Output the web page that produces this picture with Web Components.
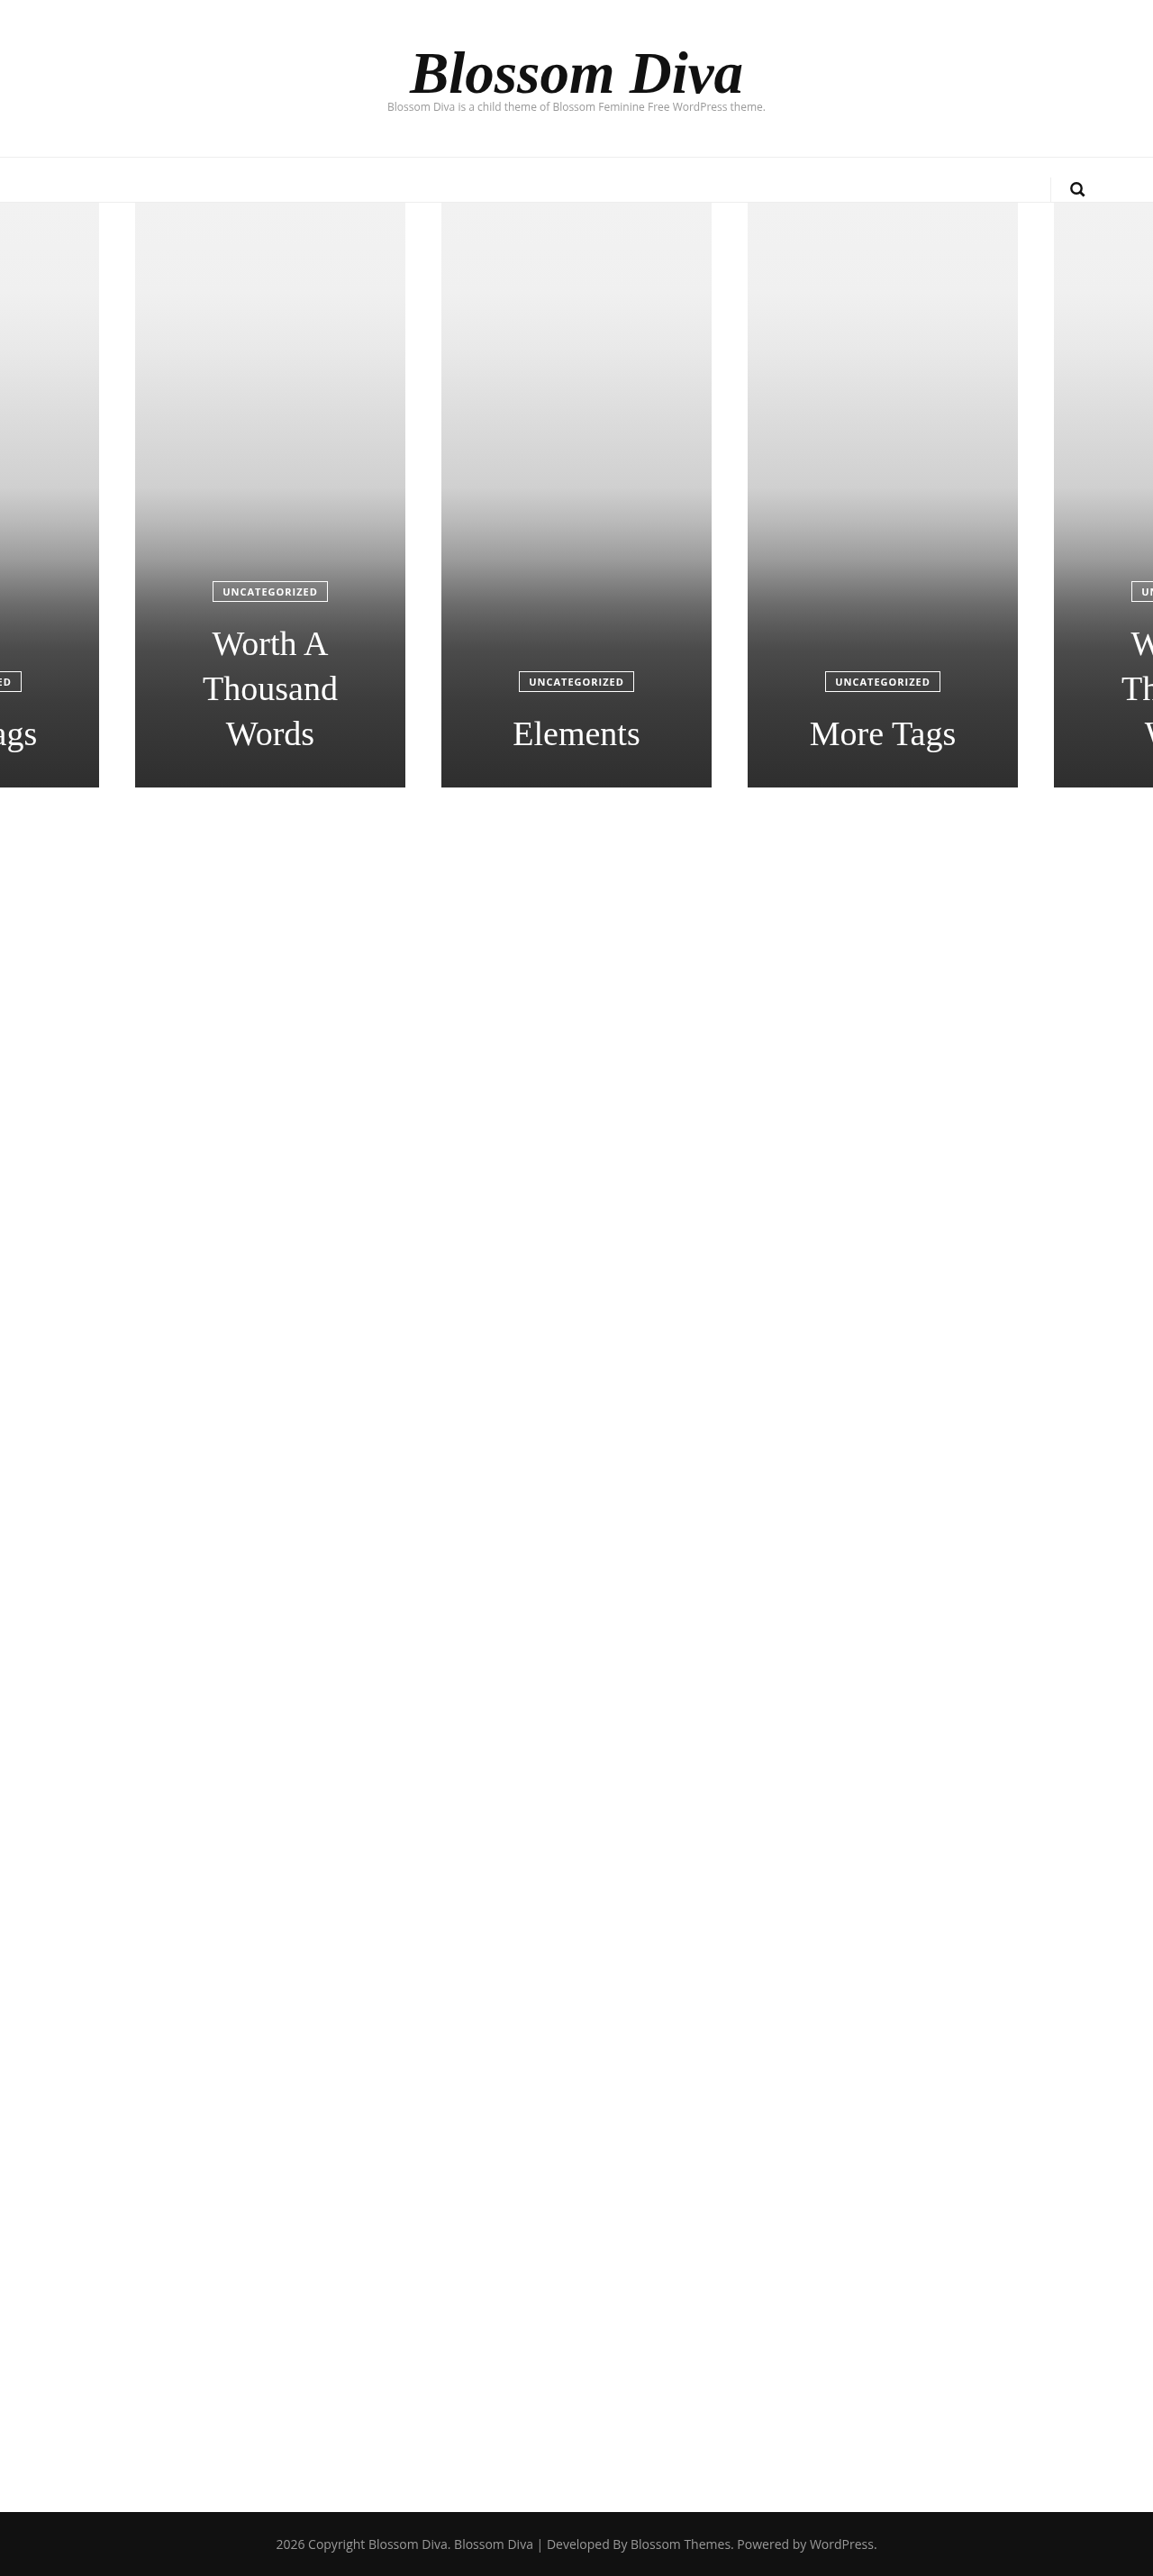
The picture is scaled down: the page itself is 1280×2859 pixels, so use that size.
<!DOCTYPE html>
<html lang="en">
<head>
<meta charset="utf-8">
<title>Blossom Diva</title>
<style>
  html, body { margin: 0; padding: 0; background: #fff; }
  body { font-family: "Open Sans", "Liberation Sans", sans-serif; }
</style>
</head>
<body>
<site-page>
  <site-header slot="header" title="Blossom Diva" tagline="Blossom Diva is a child theme of Blossom Feminine Free WordPress theme."></site-header>
  <site-nav slot="nav"></site-nav>
  <post-slider slot="slider">
    <post-card category="Uncategorized">More Tags</post-card>
    <post-card category="Uncategorized">Worth A Thousand Words</post-card>
    <post-card category="Uncategorized">Elements</post-card>
    <post-card category="Uncategorized">More Tags</post-card>
    <post-card category="Uncategorized">Worth A Thousand Words</post-card>
  </post-slider>
  <site-footer slot="footer">2026 Copyright Blossom Diva. Blossom Diva | Developed By Blossom Themes. Powered by WordPress.</site-footer>
</site-page>

<script>
  class SitePage extends HTMLElement {
    constructor() {
      super();
      // own layer: the reference text has grey antialiasing, not subpixel
      this.attachShadow({ mode: "open" }).innerHTML = `
        <style>
          :host { display: flex; flex-direction: column; min-height: 2859px; will-change: transform; }
          main { flex: 1; }
        </style>
        <slot name="header"></slot>
        <slot name="nav"></slot>
        <slot name="slider"></slot>
        <main></main>
        <slot name="footer"></slot>
      `;
    }
  }

  class SiteHeader extends HTMLElement {
    constructor() {
      super();
      this.attachShadow({ mode: "open" }).innerHTML = `
        <style>
          :host {
            border-bottom: 1px solid #eee;
            box-sizing: border-box;
            display: block;
            height: 175px;
            padding-top: 50px;
            text-align: center;
          }
          h1 {
            color: #111;
            font: italic 700 65px/62px "Liberation Serif", serif;
            margin: 0;
          }
          p {
            color: #999;
            font: 400 12px/12px "Open Sans", sans-serif;
            margin: 1px 0 0;
          }
        </style>
        <h1></h1>
        <p></p>
      `;
      this.shadowRoot.querySelector("h1").textContent = this.getAttribute("title");
      this.shadowRoot.querySelector("p").textContent = this.getAttribute("tagline");
    }
  }

  class SiteNav extends HTMLElement {
    constructor() {
      super();
      this.attachShadow({ mode: "open" }).innerHTML = `
        <style>
          :host {
            border-bottom: 1px solid #eee;
            box-sizing: border-box;
            display: flex;
            height: 50px;
            justify-content: flex-end;
            padding-top: 22px;
          }
          .search {
            align-items: center;
            border-left: 1px solid #eee;
            box-sizing: border-box;
            display: flex;
            justify-content: flex-start;
            padding-left: 21px;
            width: 114px;
          }
          svg { display: block; }
        </style>
        <div class="search">
          <svg width="17" height="17" viewBox="0 0 17 17" fill="none" stroke="#111" aria-hidden="true">
            <circle cx="7" cy="7" r="5.7" stroke-width="2.4"></circle>
            <path d="M11 11 15.6 15.6" stroke-width="2.8"></path>
          </svg>
        </div>
      `;
    }
  }

  class PostSlider extends HTMLElement {
    constructor() {
      super();
      this.attachShadow({ mode: "open" }).innerHTML = `
        <style>
          :host {
            display: flex;
            gap: 40px;
            justify-content: center;
            overflow: hidden;
          }
        </style>
        <slot></slot>
      `;
    }
  }

  class PostCard extends HTMLElement {
    constructor() {
      super();
      this.attachShadow({ mode: "open" }).innerHTML = `
        <style>
          :host {
            align-items: center;
            background: linear-gradient(to bottom, #f2f2f2 0%, #f0f0f0 15.4%, #e9e9e9 25%, #dcdcdc 37%, #d0d0d0 48.7%, #b8b8b8 55%, #9c9c9c 61%, #848484 64.8%, #6c6c6c 68.7%, #5a5a5a 72.5%, #4b4b4b 76.4%, #3c3c3c 85.4%, #2e2e2e 100%);
            box-sizing: border-box;
            color: #fff;
            display: flex;
            flex: 0 0 300px;
            flex-direction: column;
            height: 649px;
            justify-content: flex-end;
            padding: 0 30px 35px;
            text-align: center;
          }
          .cat {
            border: 1px solid #fff;
            font: 700 11px/21px "Open Sans", sans-serif;
            letter-spacing: 1px;
            padding: 0 10.5px;
            text-transform: uppercase;
          }
          h2 {
            font: 400 38px/50px "Liberation Serif", serif;
            margin: 21px 0 0;
          }
        </style>
        <span class="cat"></span>
        <h2><slot></slot></h2>
      `;
      this.shadowRoot.querySelector(".cat").textContent = this.getAttribute("category");
    }
  }

  class SiteFooter extends HTMLElement {
    constructor() {
      super();
      this.attachShadow({ mode: "open" }).innerHTML = `
        <style>
          :host {
            background: #111;
            box-sizing: border-box;
            color: #999;
            display: block;
            font: 400 14px/24px "Open Sans", sans-serif;
            height: 71px;
            padding-top: 24px;
            text-align: center;
          }
        </style>
        <slot></slot>
      `;
    }
  }

  customElements.define("site-page", SitePage);
  customElements.define("site-header", SiteHeader);
  customElements.define("site-nav", SiteNav);
  customElements.define("post-slider", PostSlider);
  customElements.define("post-card", PostCard);
  customElements.define("site-footer", SiteFooter);
</script>
</body>
</html>
